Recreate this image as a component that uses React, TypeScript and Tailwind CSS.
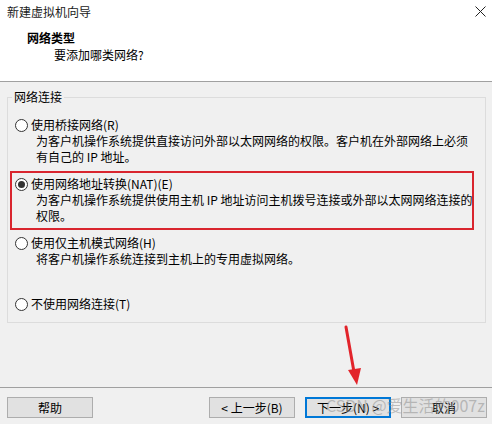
import React from "react";

const font = { fontFamily: '"Noto Sans CJK SC", "Noto Sans", sans-serif' };

function Radio({ checked }: { checked?: boolean }) {
  return (
    <span className="w-[13px] h-[13px] rounded-full border border-[#333333] bg-white flex items-center justify-center shrink-0">
      {checked && <span className="w-[7px] h-[7px] rounded-full bg-[#333333]" />}
    </span>
  );
}

function Option({
  label,
  lines,
  checked,
}: {
  label: string;
  lines: string[];
  checked?: boolean;
}) {
  return (
    <div className="flex flex-col">
      <div className="flex items-center gap-[3px] h-[16px]">
        <Radio checked={checked} />
        <span className="leading-[16px] whitespace-nowrap">{label}</span>
      </div>
      {lines.map((l, i) => (
        <div key={i} className="pl-[21px] leading-[16px] whitespace-nowrap">
          {l}
        </div>
      ))}
    </div>
  );
}

function Btn({ children, primary }: { children: React.ReactNode; primary?: boolean }) {
  return (
    <button
      className={
        "w-[86px] h-[21px] flex items-center justify-center bg-[#e1e1e1] text-[12px] leading-[16px] text-black " +
        (primary ? "border-2 border-[#0078d7]" : "border border-[#adadad]")
      }
    >
      {children}
    </button>
  );
}

export default function App() {
  return (
    <div
      className="relative w-[492px] h-[424px] bg-[#f0f0f0] text-[12px] text-black flex flex-col overflow-hidden"
      style={font}
    >
      {/* header */}
      <div className="h-[82px] bg-white border-b border-[#a0a0a0] flex flex-col shrink-0">
        <div className="flex items-center justify-between pl-[7px] pr-[6px] pt-[4px] h-[20px]">
          <span className="leading-[16px] text-[#1a1a1a]">新建虚拟机向导</span>
          <svg width="11" height="11" viewBox="0 0 11 11" className="mt-[-2px]">
            <path d="M0.5 0.5 L10.5 10.5 M10.5 0.5 L0.5 10.5" stroke="#222" strokeWidth="1" />
          </svg>
        </div>
        <div className="pl-[27px] mt-[10px] font-bold leading-[16px]">网络类型</div>
        <div className="pl-[54px] mt-[1px] leading-[16px]">要添加哪类网络?</div>
      </div>

      {/* group box */}
      <fieldset className="ml-[7px] mt-[7px] w-[479px] border border-[#dcdcdc] shrink-0">
        <legend className="ml-[4px] px-[2px] leading-[16px]">网络连接</legend>
        <div className="flex flex-col pl-[7px] pt-[12px] pb-[10px]">
          <Option
            label="使用桥接网络(R)"
            lines={[
              "为客户机操作系统提供直接访问外部以太网网络的权限。客户机在外部网络上必须",
              "有自己的 IP 地址。",
            ]}
          />
          <div className="mt-[6px] -ml-[5px] w-[464px] border-2 border-[#d9252e] pl-[3px] pt-[3px] pb-[4px]">
            <Option
              checked
              label="使用网络地址转换(NAT)(E)"
              lines={[
                "为客户机操作系统提供使用主机 IP 地址访问主机拨号连接或外部以太网网络连接的",
                "权限。",
              ]}
            />
          </div>
          <div className="mt-[5px]">
            <Option label="使用仅主机模式网络(H)" lines={["将客户机操作系统连接到主机上的专用虚拟网络。"]} />
          </div>
          <div className="mt-[29px]">
            <Option label="不使用网络连接(T)" lines={[]} />
          </div>
        </div>
      </fieldset>

      {/* footer */}
      <div className="mt-auto border-t border-[#a0a0a0] h-[37px] pt-[9px] flex items-start pl-[7px] pr-[5px]">
        <Btn>帮助</Btn>
        <div className="ml-auto flex gap-[10px]">
          <Btn>&lt; 上一步(B)</Btn>
          <Btn primary>下一步(N) &gt;</Btn>
          <Btn>取消</Btn>
        </div>
      </div>

      {/* annotation arrow */}
      <svg className="absolute left-0 top-0 pointer-events-none" width="492" height="424">
        <line x1="346" y1="327" x2="354" y2="372" stroke="#e2242b" strokeWidth="3" strokeLinecap="round" />
        <path d="M348 370 L357 385 L361 368 Z" fill="#e2242b" />
      </svg>

      {/* watermark */}
      <div className="absolute left-[326px] top-[395px] text-[16px] leading-[20px] text-[#8a8a8a]/50 whitespace-nowrap pointer-events-none">
        CSDN @爱生活的007z
      </div>
    </div>
  );
}
